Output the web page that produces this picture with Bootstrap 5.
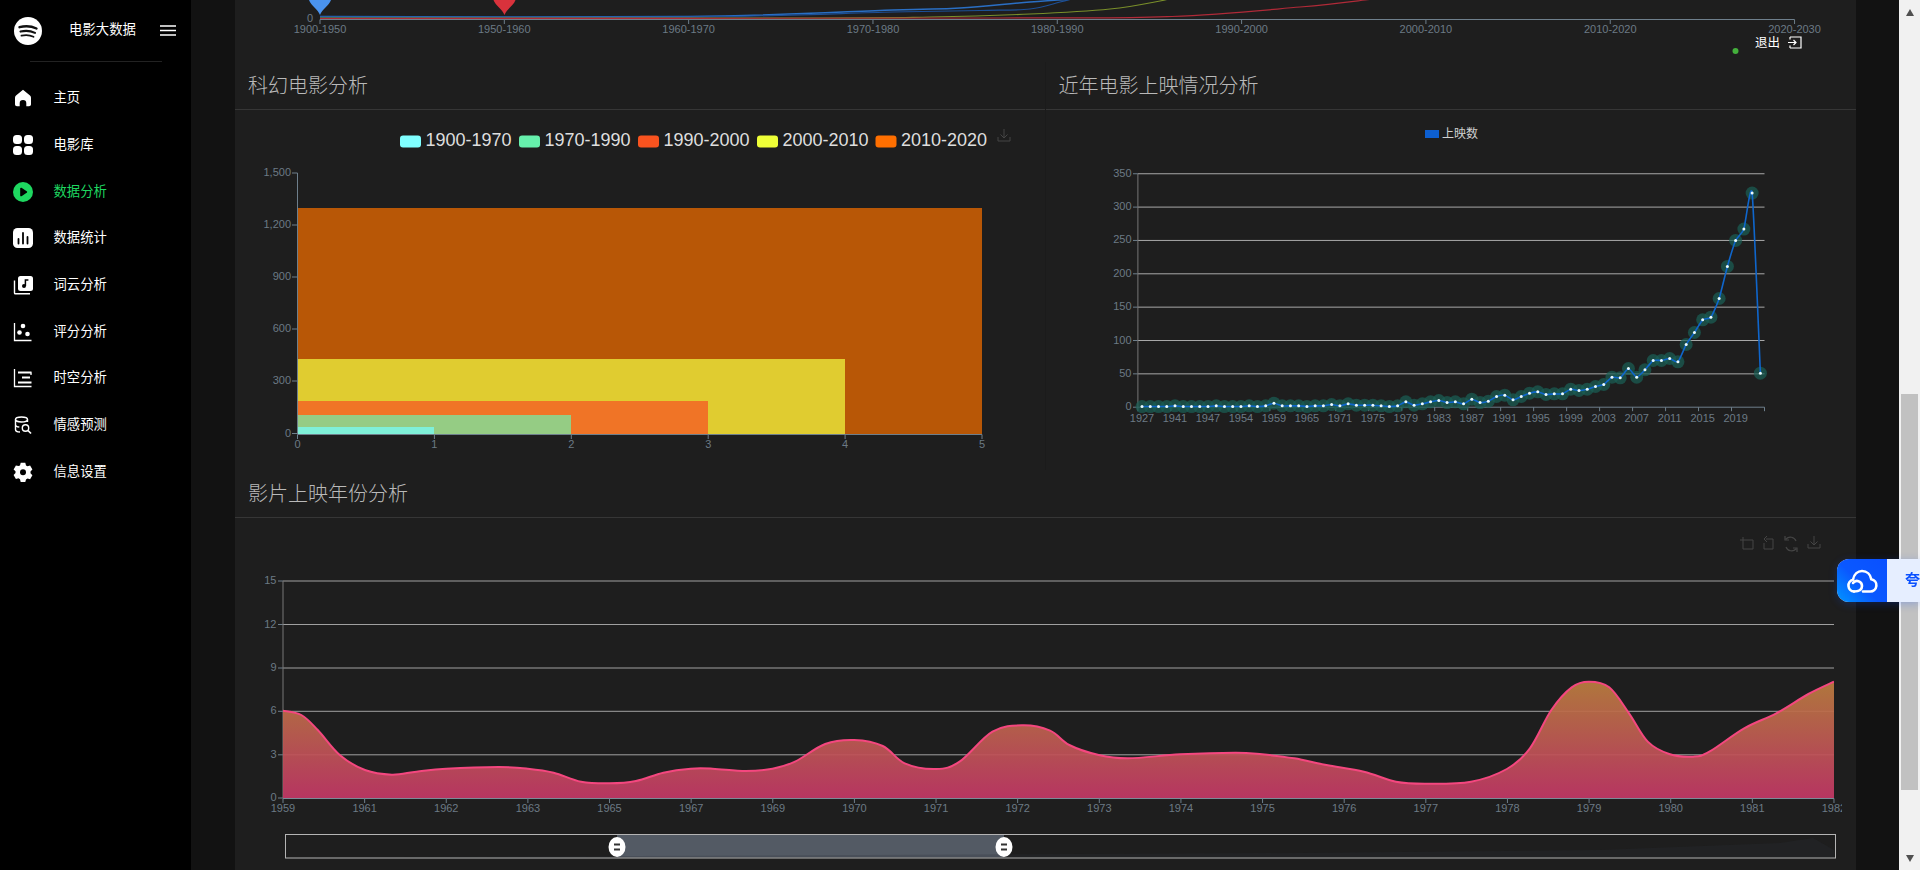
<!DOCTYPE html>
<html lang="zh-CN">
  <head>
    <meta charset="UTF-8" />
    <meta name="viewport" content="width=device-width, initial-scale=1.0" />
    <link
      rel="stylesheet"
      href="https://cdn.jsdelivr.net/npm/bootstrap@5.3.0/dist/css/bootstrap.min.css"
    />
    <title>电影大数据</title>
    <style>
      body {
        height: 100vh;
        overflow: hidden;
        background: #121212;
        font-family: "Liberation Sans", "Noto Sans CJK SC", sans-serif;
      }
      .side-menu {
        width: 191px;
        background: #000;
        color: #fff;
      }
      .brand-row {
        height: 61px;
        padding-left: 14px;
        font-size: 13.4px;
      }
      .brand-title {
        margin-left: 27px;
        width: 67px;
      }
      .brand-toggle {
        margin-left: 24px;
      }
      .side-rule {
        width: 132px;
        height: 1px;
        margin: 0 0 13px 30px;
        background: #222;
      }
      .side-link {
        height: 46.7px;
        padding-left: 13px;
        gap: 20.5px;
        color: #fff;
        font-size: 13.33px;
        text-decoration: none;
      }
      .side-link.on {
        color: #1ed760;
      }
      .content-area {
        padding: 0 43px 0 44px;
        min-width: 0;
      }
      .chart-panel {
        --bs-card-bg: #1e1e1e;
        --bs-card-border-width: 0;
        --bs-card-border-radius: 0;
        --bs-card-inner-border-radius: 0;
      }
      .chart-panel .card-header {
        height: 48px;
        padding: 1px 13px 0;
        background: #1e1e1e;
        border-bottom: 1px solid #363636;
        color: #b9b9b9;
        font-size: 20px;
        font-weight: 300;
        line-height: 47px;
      }
      .split-left {
        border-right: 1px solid #1b1b1b;
      }
      .chart-art {
        display: block;
        font-family: "Liberation Sans", "Noto Sans CJK SC", sans-serif;
      }
      .tick {
        fill: #6c7a85;
        font-size: 11px;
      }
      .legend-big {
        fill: #dedede;
        font-size: 18px;
      }
      .legend-small {
        fill: #cfcfcf;
        font-size: 12px;
      }
      .logout-text {
        fill: #fff;
        font-size: 12.5px;
      }
      .fake-scroll {
        width: 21px;
        background: #f1f1f1;
        padding: 0 2px;
      }
      .fake-scroll .arrow-up,
      .fake-scroll .arrow-down {
        width: 0;
        height: 0;
        margin: 0 auto;
        border-left: 4.5px solid transparent;
        border-right: 4.5px solid transparent;
      }
      .fake-scroll .arrow-up {
        margin-top: 9px;
        border-bottom: 7px solid #505050;
      }
      .fake-scroll .arrow-down {
        margin-bottom: 8px;
        border-top: 7px solid #505050;
      }
      .scroll-thumb {
        height: 396px;
        margin-top: 378px;
        background: #c1c1c1;
      }
      .cloud-tab {
        position: fixed;
        top: 559px;
        left: 1837px;
        width: 83px;
        height: 43px;
        overflow: hidden;
        background: #e6eeff;
        border-radius: 12px 0 0 12px;
        box-shadow: 0 2px 8px rgba(10, 80, 255, 0.25);
      }
      .cloud-icon {
        width: 50px;
        background: linear-gradient(45deg, #0096ff 0%, #0a58ff 45%, #0a50ff 100%);
      }
      .cloud-word {
        padding-left: 18px;
        color: #0a50ff;
        font-size: 15px;
        font-weight: 700;
        white-space: nowrap;
      }
    </style>
  </head>
  <body class="d-flex">
    <aside class="side-menu flex-shrink-0">
      <div class="brand-row d-flex align-items-center">
        <svg width="28" height="28" viewBox="0 0 28 28">
          <circle cx="14" cy="14" r="14" fill="#fff" />
          <g fill="none" stroke="#111" stroke-linecap="round">
            <path d="M5.5 10.2c5.800-1.600 12-1.100 17 1.300" stroke-width="2.400" />
            <path d="M6.500 14.600c5-1.300 10.200-.800 14.500 1.300" stroke-width="2.100" />
            <path d="M7.500 18.700c4.300-1 8.500-.600 12 1.100" stroke-width="1.800" />
          </g>
        </svg>
        <span class="brand-title">电影大数据</span>
        <svg class="brand-toggle" width="16" height="11" viewBox="0 0 16 11">
          <path d="M0 1h16M0 5.500h16M0 10h16" stroke="#fff" stroke-width="1.600" />
        </svg>
      </div>
      <div class="side-rule"></div>
      <nav class="nav flex-column">
        <a class="side-link d-flex align-items-center" href="#">
          <svg width="20" height="20" viewBox="0 0 20 20" fill="#fff">
            <path d="M10 1.800 3 7.600c-.700.600-1 1.200-1 2.100v6.500c0 1.200.8 2 2 2h2.700v-3a3.300 3.300 0 0 1 6.600 0v3H16c1.200 0 2-.8 2-2V9.700c0-.9-.3-1.500-1-2.100z" />
          </svg>
          主页
        </a>
        <a class="side-link d-flex align-items-center" href="#">
          <svg width="20" height="20" viewBox="0 0 20 20" fill="#fff">
            <rect width="9" height="9" rx="3.500" />
            <rect x="11" width="9" height="9" rx="3.500" />
            <rect y="11" width="9" height="9" rx="3.500" />
            <rect x="11" y="11" width="9" height="9" rx="3.500" />
          </svg>
          电影库
        </a>
        <a class="side-link on d-flex align-items-center" href="#">
          <svg width="20" height="20" viewBox="0 0 20 20">
            <circle cx="10" cy="10" r="10" fill="#1ed760" />
            <path d="M7.200 6.600c0-.7.700-1.100 1.300-.8l5.200 3.400c.6.400.6 1.200 0 1.600l-5.200 3.400c-.6.300-1.300-.1-1.300-.8z" fill="#000" />
          </svg>
          数据分析
        </a>
        <a class="side-link d-flex align-items-center" href="#">
          <svg width="20" height="20" viewBox="0 0 20 20">
            <rect width="20" height="20" rx="4.500" fill="#fff" />
            <path d="M5.500 11v4.500M10 5v10.500M14.500 9v6.500" stroke="#000" stroke-width="1.800" stroke-linecap="round" />
          </svg>
          数据统计
        </a>
        <a class="side-link d-flex align-items-center" href="#">
          <svg width="20" height="20" viewBox="0 0 20 20">
            <rect x="5" y="1" width="15" height="15" rx="2.500" fill="#fff" />
            <path d="M1.500 5.500v12.500c0 .5.300.8.800.8h14.700" fill="none" stroke="#fff" stroke-width="1.400" />
            <circle cx="11" cy="11" r="2" fill="#000" />
            <path d="M12.400 11V5h3" fill="none" stroke="#000" stroke-width="1.500" />
          </svg>
          词云分析
        </a>
        <a class="side-link d-flex align-items-center" href="#">
          <svg width="20" height="20" viewBox="0 0 20 20" fill="#fff">
            <path d="M1.500 1v17.500h17" fill="none" stroke="#fff" stroke-width="1.300" />
            <circle cx="10" cy="4" r="2.300" />
            <circle cx="6.500" cy="10.500" r="2.300" />
            <circle cx="14.500" cy="12" r="2.300" />
          </svg>
          评分分析
        </a>
        <a class="side-link d-flex align-items-center" href="#">
          <svg width="20" height="20" viewBox="0 0 20 20" fill="none" stroke="#fff">
            <path d="M1.500 1v17.500h17" stroke-width="1.300" />
            <path d="M5 4.500h13.500M9 9.500h8M5 14.500h13.500" stroke-width="1.800" />
            <path d="M18 4.500v2.500" stroke-width="1.300" />
          </svg>
          时空分析
        </a>
        <a class="side-link d-flex align-items-center" href="#">
          <svg width="20" height="20" viewBox="0 0 20 20" fill="none" stroke="#fff" stroke-width="1.400">
            <ellipse cx="8.500" cy="4.500" rx="6" ry="2.500" />
            <path d="M2.500 4.500v10c0 1.500 2 2.500 4.500 2.500M14.500 4.500v2.500M2.500 9.500c0 1.400 1.800 2.400 3.800 2.500" />
            <circle cx="12.500" cy="13" r="3.200" />
            <path d="m15 15.500 3 3" stroke-width="1.700" />
          </svg>
          情感预测
        </a>
        <a class="side-link d-flex align-items-center" href="#">
          <svg width="20" height="20" viewBox="0 0 20 20">
            <path fill="#fff" d="M7.700.8h4.600l.7 2.600 1.500.9 2.600-.7 2.300 4-1.900 1.900v1.800l1.900 1.900-2.300 4-2.600-.7-1.500.9-.7 2.600H7.700L7 17.200l-1.500-.9-2.600.7-2.300-4 1.900-1.900V9.300L.6 7.400l2.300-4 2.600.7L7 3.400z" />
            <circle cx="10" cy="10.300" r="3" fill="#000" />
          </svg>
          信息设置
        </a>
      </nav>
    </aside>

    <main class="content-area flex-grow-1">
      <div class="chart-panel card">
        <svg id="topChart" class="chart-art" width="1621" height="62" viewBox="235 0 1621 62"></svg>
      </div>
      <div class="row g-0">
        <div class="col-6">
          <div class="chart-panel card split-left">
            <div class="card-header">科幻电影分析</div>
            <svg id="sciChart" class="chart-art" width="810" height="360" viewBox="235 110 810 360"></svg>
          </div>
        </div>
        <div class="col-6">
          <div class="chart-panel card">
            <div class="card-header">近年电影上映情况分析</div>
            <svg id="yearChart" class="chart-art" width="811" height="360" viewBox="1045 110 811 360"></svg>
          </div>
        </div>
      </div>
      <div class="chart-panel card">
        <div class="card-header">影片上映年份分析</div>
        <svg id="areaChart" class="chart-art" width="1621" height="352" viewBox="235 518 1621 352"></svg>
      </div>
    </main>

    <div class="fake-scroll flex-shrink-0 d-flex flex-column">
      <div class="arrow-up"></div>
      <div class="scroll-thumb"></div>
      <div class="arrow-down mt-auto"></div>
    </div>

    <div class="cloud-tab d-flex">
      <div class="cloud-icon flex-shrink-0 d-flex align-items-center justify-content-center">
        <svg width="32" height="26" viewBox="0 0 32 26" fill="none" stroke="#fff" stroke-width="2.600">
          <path d="M8 23.500a6 6 0 0 1-1-11.800C8 6 12 3 16 3c5 0 8.500 3.500 9.300 8.200A6.200 6.200 0 0 1 24 23.500h-7" stroke-linecap="round" />
          <path d="M8 23.500c4 0 8-1 8-5.500a5 5 0 0 0-9-3" stroke-linecap="round" />
        </svg>
      </div>
      <div class="cloud-word d-flex align-items-center">夸</div>
    </div>

    <script>
      const NS = "http://www.w3.org/2000/svg";

      function add(parent, tag, attrs, text) {
        const el = document.createElementNS(NS, tag);
        for (const k in attrs) el.setAttribute(k, attrs[k]);
        if (text !== undefined) el.textContent = text;
        parent.appendChild(el);
        return el;
      }

      // catmull-rom through the points, k is how tight the curve is
      function smooth(pts, k) {
        let d = "M" + pts[0][0] + " " + pts[0][1];
        for (let i = 0; i < pts.length - 1; i++) {
          const p0 = pts[i - 1] || pts[i];
          const p1 = pts[i];
          const p2 = pts[i + 1];
          const p3 = pts[i + 2] || p2;
          d +=
            " C" + (p1[0] + (p2[0] - p0[0]) * k) + " " + (p1[1] + (p2[1] - p0[1]) * k) +
            " " + (p2[0] - (p3[0] - p1[0]) * k) + " " + (p2[1] - (p3[1] - p1[1]) * k) +
            " " + p2[0] + " " + p2[1];
        }
        return d;
      }

      function downloadIcon(svg, x, y) {
        add(svg, "path", {
          d: `M${x} ${y - 7}v9m-3.500-3.500 3.500 3.500 3.500-3.500M${x - 6} ${y + 1}v4h12v-4`,
          fill: "none", stroke: "#454545", "stroke-width": 1,
        });
      }

      // top chart, only its lower edge is on screen
      const top_ = document.getElementById("topChart");
      const decades = ["1900-1950", "1950-1960", "1960-1970", "1970-1980", "1980-1990", "1990-2000", "2000-2010", "2010-2020", "2020-2030"];
      add(top_, "path", { d: smooth([[320, 16.500], [689, 16.500], [893, 10], [960, 8], [1030, 2], [1090, -2]], 0.17), fill: "none", stroke: "#2a6fc4", "stroke-width": 1.500 });
      add(top_, "path", { d: smooth([[320, 17], [689, 17], [893, 12], [980, 10.500], [1030, 9], [1060, 2], [1075, -2]], 0.17), fill: "none", stroke: "#1c4f96", "stroke-width": 1.200 });
      add(top_, "path", { d: smooth([[320, 18], [800, 18], [930, 17], [1030, 14], [1110, 9], [1160, 1], [1170, -2]], 0.17), fill: "none", stroke: "#7a8f2a", "stroke-width": 1.200 });
      add(top_, "path", { d: smooth([[320, 18.500], [1000, 18], [1172, 16.500], [1300, 7], [1365, 0], [1375, -2]], 0.17), fill: "none", stroke: "#b02a38", "stroke-width": 1.200 });
      add(top_, "line", { x1: 320, x2: 1794.500, y1: 19.500, y2: 19.500, stroke: "#6e7f8c" });
      decades.forEach((t, i) => {
        const x = 320 + i * 184.320;
        add(top_, "line", { x1: x, x2: x, y1: 19.500, y2: 24, stroke: "#6e7f8c" });
        add(top_, "text", { x: x, y: 33, "text-anchor": "middle", class: "tick" }, t);
      });
      add(top_, "text", { x: 310, y: 22, "text-anchor": "middle", class: "tick" }, "0");
      add(top_, "path", { d: "M309 0h22c-2 6-9 9-11 15c-2-6-9-9-11-15z", fill: "#4a93ee" });
      add(top_, "path", { d: "M493.500 0h22c-2 6-9 9-11 15c-2-6-9-9-11-15z", fill: "#d9323c" });
      add(top_, "circle", { cx: 1735.500, cy: 51, r: 3, fill: "#44b03c" });
      add(top_, "text", { x: 1755, y: 46.500, class: "logout-text" }, "退出");
      add(top_, "path", { d: "M1790 37h11v11h-11M1790 37v2.500M1790 48v-2.500M1788 42.500h8m-2.500-2.500 2.500 2.500-2.500 2.500", fill: "none", stroke: "#fff", "stroke-width": 1.200 });

      // sci-fi stacked bars
      const sci = document.getElementById("sciChart");
      const legendItems = [
        [400, "1900-1970", "#80ffff"],
        [519, "1970-1990", "#66f0ac"],
        [638, "1990-2000", "#f9531f"],
        [757, "2000-2010", "#eeff37"],
        [875.500, "2010-2020", "#ff6f00"],
      ];
      legendItems.forEach(([x, t, c]) => {
        add(sci, "rect", { x: x, y: 135.500, width: 21, height: 12, rx: 3, fill: c });
        add(sci, "text", { x: x + 25.500, y: 145.500, class: "legend-big" }, t);
      });
      downloadIcon(sci, 1004, 136);
      [[1500, 173], [1200, 225], [900, 277], [600, 329], [300, 381], [0, 433.500]].forEach(([v, y]) => {
        add(sci, "text", { x: 291, y: y + 3, "text-anchor": "end", class: "tick" }, v.toLocaleString("en-US"));
        add(sci, "line", { x1: 292, x2: 297.500, y1: y, y2: y, stroke: "#6e7f8c" });
      });
      [[982, 208, "#b85706"], [845, 359, "#e0cc30"], [708, 401, "#f07426"], [571, 415, "#95cc84"], [434, 427, "#7ff0d8"]].forEach(([r, t, c]) => {
        add(sci, "rect", { x: 297.500, y: t, width: r - 297.500, height: 434 - t, fill: c });
      });
      add(sci, "line", { x1: 297.500, x2: 297.500, y1: 173, y2: 434, stroke: "#6e7f8c" });
      add(sci, "line", { x1: 297.500, x2: 982, y1: 434.500, y2: 434.500, stroke: "#6e7f8c" });
      [0, 1, 2, 3, 4, 5].forEach((n) => {
        const x = 297.500 + n * 136.900;
        add(sci, "line", { x1: x, x2: x, y1: 434.500, y2: 439, stroke: "#6e7f8c" });
        add(sci, "text", { x: x, y: 448, "text-anchor": "middle", class: "tick" }, n);
      });

      // yearly releases line
      const yr = document.getElementById("yearChart");
      add(yr, "rect", { x: 1424, y: 130, width: 14, height: 8, fill: "#0d5fd0" });
      add(yr, "text", { x: 1441, y: 138, class: "legend-small" }, "上映数");
      const yearVals = [1,1,1,1,2,1,1,1,1,2,1,1,1,2,1,2,6,2,2,2,1,2,2,4,2,5,3,3,3,2,1,2,8,3,5,8,10,7,8,5,12,7,9,16,18,11,16,21,23,19,20,20,27,25,27,31,34,45,44,58,45,56,70,70,73,68,94,112,131,135,163,211,250,267,321,51];
      const yearLabels = [1927,1941,1947,1954,1959,1965,1971,1975,1979,1983,1987,1991,1995,1999,2003,2007,2011,2015,2019];
      const yY = (v) => 407.200 - v * 0.667;
      const bandW = 626.600 / 76;
      const yX = (i) => 1136.900 + bandW * (i + 0.500);
      [350, 300, 250, 200, 150, 100, 50, 0].forEach((v) => {
        const y = yY(v);
        if (v > 0) add(yr, "line", { x1: 1136.900, x2: 1763.500, y1: y, y2: y, stroke: "#a8a8a8" });
        add(yr, "line", { x1: 1132, x2: 1136.900, y1: y, y2: y, stroke: "#6e7f8c" });
        add(yr, "text", { x: 1130.500, y: y + 3, "text-anchor": "end", class: "tick" }, v);
      });
      add(yr, "line", { x1: 1136.900, x2: 1136.900, y1: yY(350), y2: yY(0), stroke: "#777" });
      add(yr, "line", { x1: 1136.900, x2: 1763.500, y1: yY(0), y2: yY(0), stroke: "#6e7f8c" });
      for (let i = 0; i <= 76; i += 4) {
        const x = 1136.900 + bandW * i;
        add(yr, "line", { x1: x, x2: x, y1: yY(0), y2: yY(0) + 4, stroke: "#6e7f8c" });
      }
      yearLabels.forEach((t, n) => {
        add(yr, "text", { x: yX(n * 4), y: 421.500, "text-anchor": "middle", class: "tick" }, t);
      });
      const yearPts = yearVals.map((v, i) => [yX(i), yY(v)]);
      yearPts.forEach(([x, y]) => add(yr, "circle", { cx: x, cy: y, r: 6.500, fill: "#1a5f55", opacity: 0.7 }));
      add(yr, "path", { d: smooth(yearPts, 0.09), fill: "none", stroke: "#0f66cc", "stroke-width": 1.600 });
      yearPts.forEach(([x, y]) => add(yr, "circle", { cx: x, cy: y, r: 1.500, fill: "#eafcff" }));

      // release-year area with slider
      const area = document.getElementById("areaChart");
      const defs = add(area, "defs", {});
      const grad = add(defs, "linearGradient", { id: "areaFill", gradientUnits: "userSpaceOnUse", x1: 0, y1: 680, x2: 0, y2: 798 });
      add(grad, "stop", { offset: 0, "stop-color": "#bb7e3e" });
      add(grad, "stop", { offset: 1, "stop-color": "#c23766" });
      const clip = add(defs, "clipPath", { id: "areaClip" });
      add(clip, "rect", { x: 283, y: 518, width: 1551, height: 352 });
      [[1748, "M-5 -7v12h10v-9h-13"], [1769, "M-3 -5h7v10h-9v-6M-2 -8l-3 3 3 3"]].forEach(([x, d]) => {
        add(area, "path", { d: d, transform: `translate(${x} 544)`, fill: "none", stroke: "#454545" });
      });
      add(area, "path", { d: "M1796 541a6 6 0 0 0-10-2M1786 547a6 6 0 0 0 10 2M1785 536v4h4M1797 552v-4h-4", fill: "none", stroke: "#454545", "stroke-width": 1.200 });
      downloadIcon(area, 1814, 543);
      [[15, 581], [12, 624.500], [9, 668], [6, 711.300], [3, 754.800], [0, 798]].forEach(([v, y]) => {
        if (v > 0) add(area, "line", { x1: 283, x2: 1834, y1: y, y2: y, stroke: "#a0a0a0" });
        add(area, "line", { x1: 278, x2: 283, y1: y, y2: y, stroke: "#6e7f8c" });
        add(area, "text", { x: 276.500, y: y + 3, "text-anchor": "end", class: "tick" }, v);
      });
      add(area, "line", { x1: 283, x2: 283, y1: 581, y2: 798, stroke: "#777" });
      // traced from the chart: first run is left of 1090px, second run right of it
      const leftTrace = [[97,722],[130,735],[160,780],[200,855],[246,900],[295,914],[340,905],[394,896],[490,891],[543,896],[590,908],[640,935],[692,940],[740,933],[790,908],[840,896],[880,896],[940,903],[989,896],[1030,875],[1085,822],[1138,810],[1190,828],[1230,880],[1287,897],[1330,875],[1390,785],[1445,766],[1495,782],[1530,825]];
      const rightTrace = [[35,855],[90,865],[187,853],[290,848],[340,853],[400,865],[460,885],[530,905],[590,935],[645,941],[730,935],[797,897],[840,835],[880,720],[918,652],[950,635],[988,652],[1025,730],[1060,815],[1100,852],[1145,860],[1175,845],[1240,775],[1300,730],[1360,672],[1408,635]];
      const areaPts = leftTrace
        .map(([x, y]) => [230 + x / 1.823, 470 + y / 3])
        .concat(rightTrace.map(([x, y]) => [1080 + x / 1.867, 470 + y / 3]));
      areaPts[0][0] = 283;
      areaPts[areaPts.length - 1][0] = 1834;
      const line = smooth(areaPts, 0.17);
      add(area, "path", { d: line + " L1834 798 L283 798 Z", fill: "url(#areaFill)", "fill-opacity": 0.93, "clip-path": "url(#areaClip)" });
      add(area, "path", { d: line, fill: "none", stroke: "#f4477f", "stroke-width": 2, "clip-path": "url(#areaClip)" });
      add(area, "line", { x1: 283, x2: 1834, y1: 798.500, y2: 798.500, stroke: "#7c8a96" });
      const years = [1959,1961,1962,1963,1965,1967,1969,1970,1971,1972,1973,1974,1975,1976,1977,1978,1979,1980,1981,1982];
      const labelClip = add(defs, "clipPath", { id: "labelClip" });
      add(labelClip, "rect", { x: 235, y: 800, width: 1607, height: 30 });
      years.forEach((t, i) => {
        const x = 283 + i * 81.630;
        add(area, "line", { x1: x, x2: x, y1: 798.500, y2: 803, stroke: "#6e7f8c" });
        add(area, "text", { x: x, y: 812, "text-anchor": "middle", class: "tick", "clip-path": "url(#labelClip)" }, t);
      });
      // slider: shadow of the data, selected window, two handles
      add(area, "rect", { x: 617, y: 834.500, width: 387, height: 23, fill: "#535a64" });
      add(area, "path", { d: "M286 857.500 L1300 853 L1600 850 L1780 843 L1813 838 L1834 850 V857.500 Z", fill: "#2a3038", opacity: 0.25 });
      add(area, "rect", { x: 285.500, y: 834.500, width: 1550, height: 23.500, fill: "none", stroke: "#b4b4b4" });
      [617, 1004].forEach((x) => {
        add(area, "ellipse", { cx: x, cy: 847, rx: 8.500, ry: 10, fill: "#fff" });
        add(area, "path", { d: `M${x - 3} 844.500h6M${x - 3} 849.500h6`, stroke: "#333", "stroke-width": 2 });
      });
    </script>
  </body>
</html>
